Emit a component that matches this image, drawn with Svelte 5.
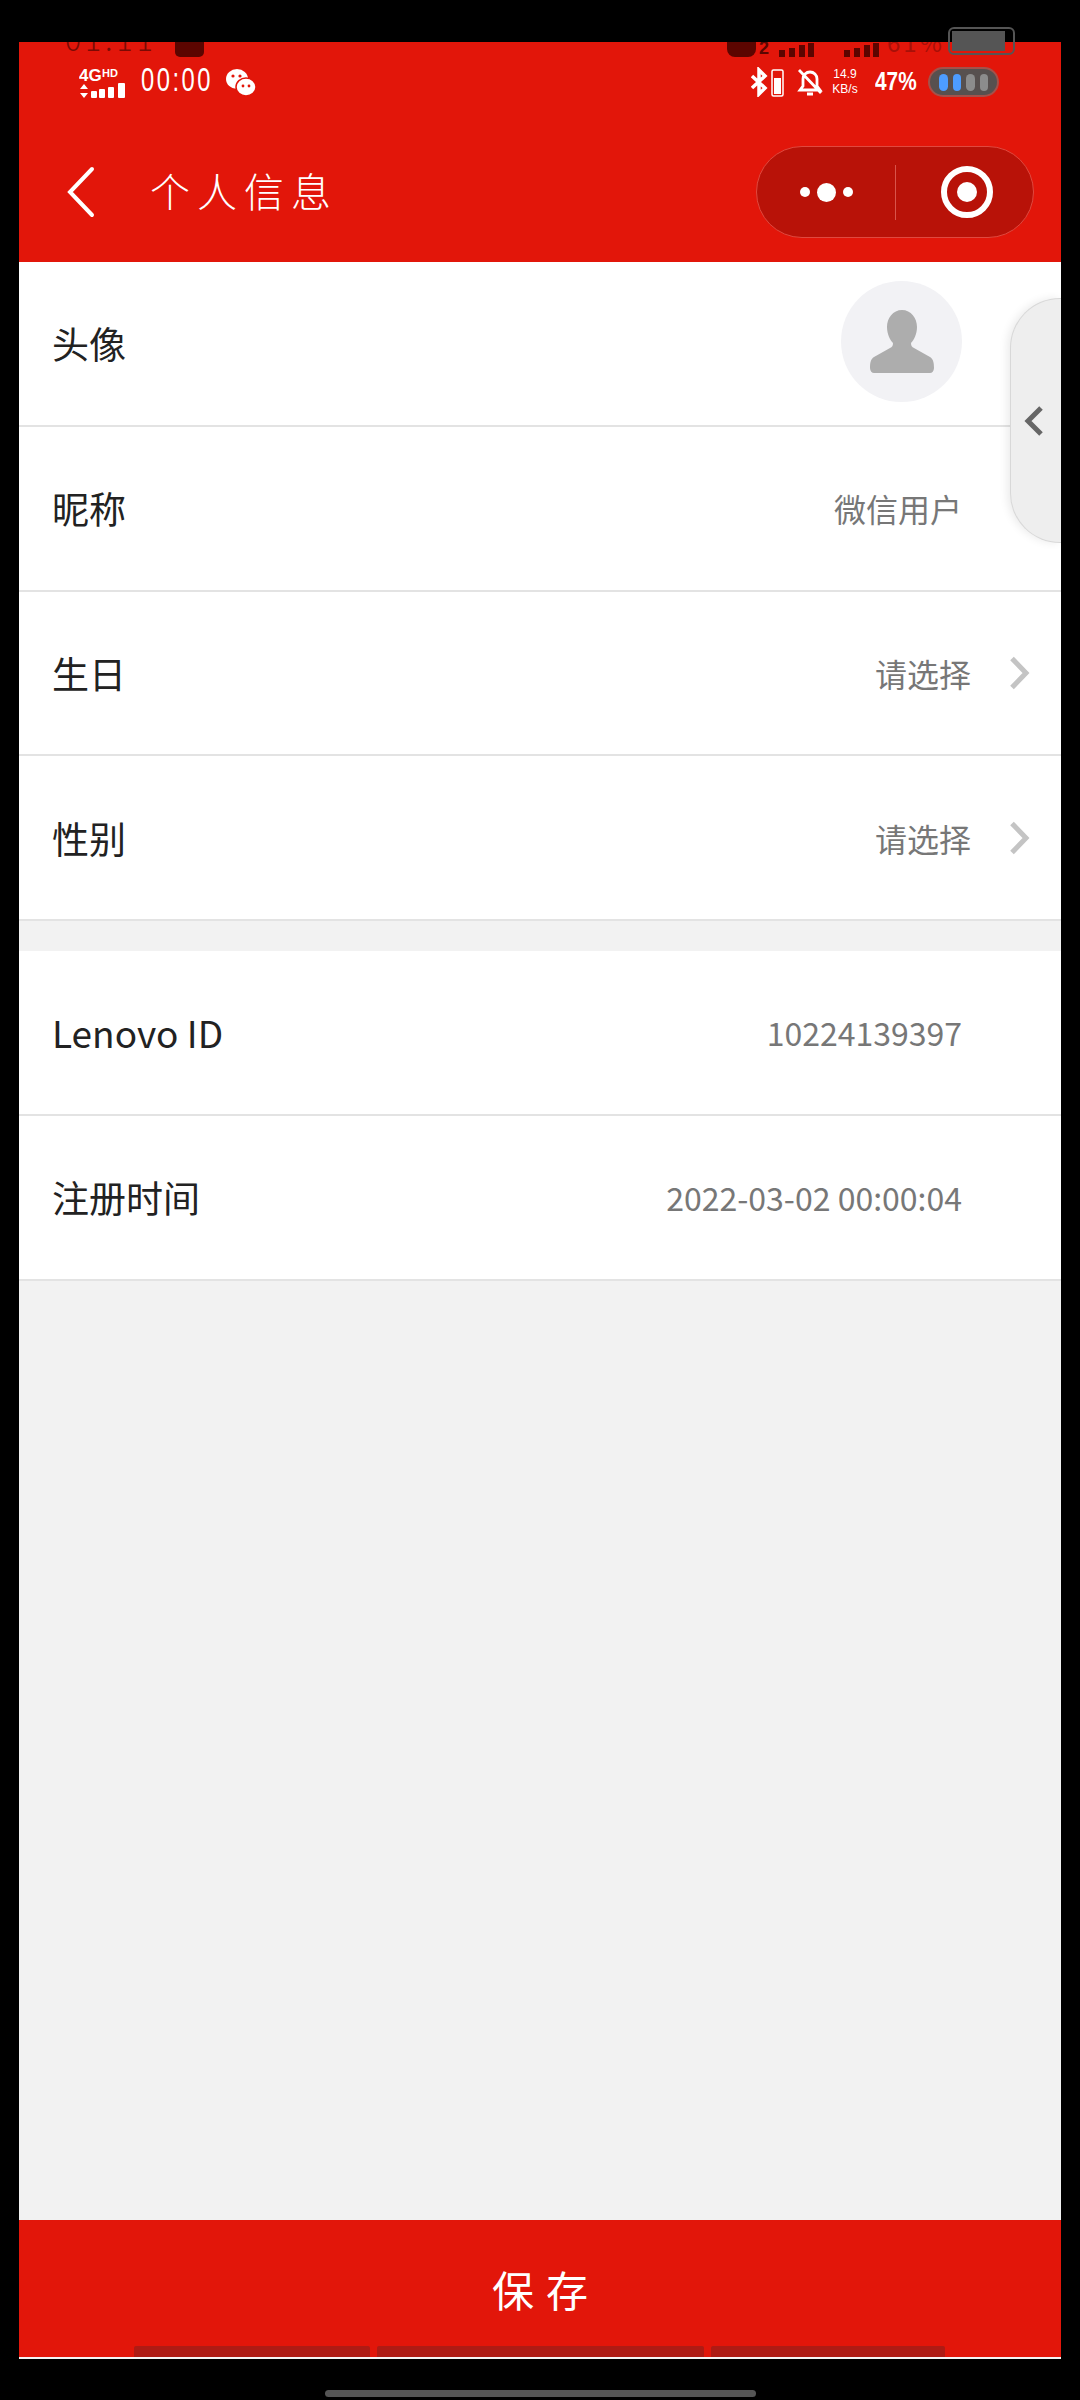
<script>
  const groupOne = [
    { label: '昵称', value: '微信用户' },
    { label: '生日', value: '请选择', arrow: true },
    { label: '性别', value: '请选择', arrow: true }
  ];
  const groupTwo = [
    { label: 'Lenovo ID', value: '10224139397' },
    { label: '注册时间', value: '2022-03-02 00:00:04' }
  ];
</script>

{#snippet row(item)}
  <div class="row">
    <span class="label">{item.label}</span>
    <span class="value" class:with-arrow={item.arrow}>{item.value}</span>
    {#if item.arrow}
      <svg class="arrow" width="20" height="34" viewBox="0 0 20 34">
        <path d="M2 2.500l14 14.500L2 31.500" fill="none" stroke="#c4c4c4" stroke-width="5" />
      </svg>
    {/if}
  </div>
{/snippet}

<div class="frame">
  <div class="screen">
    <header>
      <!-- the phone's own status bar, half hidden behind the screen edge -->
      <div class="ghost-left">
        <span class="ghost-time">01:11</span>
        <span class="ghost-badge"></span>
      </div>
      <div class="ghost-right">
        <span class="ghost-hd"></span>
        <span class="ghost-two">2</span>
        <svg width="110" height="16" viewBox="0 0 110 16" fill="#5c0500">
          <rect x="10" y="8" width="6" height="7" /><rect x="20" y="6" width="6" height="9" /><rect x="30" y="3" width="6" height="12" /><rect x="39" y="1" width="6" height="14" />
          <rect x="75" y="8" width="6" height="7" /><rect x="85" y="6" width="6" height="9" /><rect x="95" y="3" width="6" height="12" /><rect x="104" y="1" width="6" height="14" />
        </svg>
        <span class="ghost-percent">61%</span>
      </div>
      <div class="ghost-battery"><span></span></div>

      <div class="status">
        <div class="status-left">
          <svg width="48" height="32" viewBox="0 0 48 32" fill="#fff">
            <text x="0" y="14" font-family="Liberation Sans" font-weight="700" font-size="17">4G</text>
            <text x="23" y="10" font-family="Liberation Sans" font-weight="700" font-size="11">HD</text>
            <path d="M5 17l4 5H1zM5 31l4-5H1z" />
            <rect x="12" y="24" width="6" height="7" rx="1" /><rect x="20" y="22" width="6" height="9" rx="1" /><rect x="29" y="20" width="6" height="11" rx="1" /><rect x="39" y="16" width="7" height="15" rx="1" />
          </svg>
          <span class="clock">00:00</span>
          <svg width="30" height="30" viewBox="0 0 30 30" fill="#fff">
            <ellipse cx="11" cy="11" rx="11" ry="10" />
            <ellipse cx="20" cy="19" rx="10" ry="9" stroke="#e2160a" stroke-width="1.500" />
            <circle cx="7" cy="8" r="1.600" fill="#e2160a" /><circle cx="14" cy="8" r="1.600" fill="#e2160a" />
            <circle cx="17" cy="18" r="1.400" fill="#e2160a" /><circle cx="23" cy="18" r="1.400" fill="#e2160a" />
          </svg>
        </div>
        <div class="status-right">
          <svg width="34" height="30" viewBox="0 0 34 30">
            <path d="M1 9l13 12-6 6V3l6 6L1 21" fill="none" stroke="#fff" stroke-width="3.500" />
            <rect x="21" y="3" width="11" height="26" rx="1.500" fill="none" stroke="#fff" stroke-width="1.500" />
            <rect x="23" y="11" width="7" height="16" fill="#fff" />
          </svg>
          <svg class="bell" width="28" height="30" viewBox="0 0 28 30" fill="none" stroke="#fff" stroke-width="2.800">
            <path d="M4 23h20l-3-4v-7a7 7 0 0 0-14 0v7zM11 27h6M3 3l22 23" />
          </svg>
          <div class="speed"><span>14.9</span><span class="unit">KB/s</span></div>
          <span class="percent">47%</span>
          <div class="pill-battery">
            <i class="on"></i><i class="on"></i><i></i><i></i>
          </div>
        </div>
      </div>

      <div class="titlebar">
        <svg width="30" height="52" viewBox="0 0 30 52">
          <path d="M26 3L4 26l22 23" fill="none" stroke="#fff" stroke-width="4" stroke-linecap="round" />
        </svg>
        <h1>个人信息</h1>
        <div class="capsule">
          <div class="dots">
            <span></span><span class="big"></span><span></span>
          </div>
          <div class="sep"></div>
          <div class="target"><span></span></div>
        </div>
      </div>
    </header>

    <main>
      <div class="group">
        <div class="row avatar-row">
          <span class="label">头像</span>
          <div class="avatar">
            <svg width="64" height="64" viewBox="0 0 64 64" fill="#adadad">
              <path d="M32 0C41 0 47 8 47 17C47 24 44 30 41 33C41 36 42 37 44 38L60 47C63 49 64 52 64 58C64 61 62 63 60 63H4C2 63 0 61 0 58C0 52 1 49 4 47L20 38C22 37 23 36 23 33C20 30 17 24 17 17C17 8 23 0 32 0Z" />
            </svg>
          </div>
        </div>
        {#each groupOne as item}
          {@render row(item)}
        {/each}
      </div>
      <div class="group second">
        {#each groupTwo as item}
          {@render row(item)}
        {/each}
      </div>

      <div class="side-tab">
        <svg width="20" height="32" viewBox="0 0 20 32">
          <path d="M17 3L4 16l13 13" fill="none" stroke="#666" stroke-width="5" />
        </svg>
      </div>
    </main>

    <footer>
      <span>保存</span>
      <div class="tabs"><i class="one"></i><i class="two"></i><i class="three"></i></div>
    </footer>
  </div>
  <div class="home"></div>
</div>

<style>
  :global(body) {
    background: #000;
  }

  .frame {
    width: 1080px;
    height: 2400px;
    box-sizing: border-box;
    padding-top: 42px;
    background: #000;
    display: flex;
    flex-direction: column;
    align-items: center;
    font-family: "Noto Sans CJK SC", "Noto Sans", sans-serif;
    overflow: hidden;
  }

  .screen {
    width: 1042px;
    height: 2317px;
    display: flex;
    flex-direction: column;
    background: #f2f2f2;
    border-bottom: 2px solid #f4f4f4;
    box-sizing: border-box;
  }

  header {
    position: relative;
    height: 220px;
    flex: none;
    background: #e2160a;
    color: #fff;
  }

  .ghost-left {
    position: absolute;
    left: 46px;
    top: 0;
    height: 16px;
    display: flex;
    gap: 18px;
    overflow: hidden;
  }

  .ghost-time {
    margin-top: -20px;
    font-size: 30px;
    line-height: 32px;
    letter-spacing: 4px;
    font-weight: 300;
    color: #7a0a04;
  }

  .ghost-badge {
    width: 29px;
    height: 15px;
    background: #5c0500;
    border-radius: 0 0 5px 5px;
  }

  .ghost-right {
    position: absolute;
    left: 708px;
    top: 0;
    height: 16px;
    display: flex;
    align-items: flex-start;
    overflow: hidden;
  }

  .ghost-hd {
    width: 29px;
    height: 15px;
    background: #5c0500;
    border-radius: 0 0 8px 8px;
  }

  .ghost-two {
    margin: -3px 0 0 3px;
    font-family: "Liberation Sans", sans-serif;
    font-weight: 700;
    font-size: 18px;
    line-height: 18px;
    color: #5c0500;
  }

  .ghost-percent {
    margin: -14px 0 0 8px;
    font-size: 24px;
    line-height: 28px;
    letter-spacing: 3px;
    color: #a81008;
  }

  .ghost-battery {
    position: absolute;
    left: 929px;
    top: -15px;
    width: 67px;
    height: 28px;
    padding: 2px;
    box-sizing: border-box;
    border: 2px solid #555;
    border-radius: 6px;
  }

  .ghost-battery span {
    display: block;
    width: 53px;
    height: 100%;
    background: #555;
  }

  .status {
    display: flex;
    justify-content: space-between;
    padding: 25px 62px 0 60px;
    height: 56px;
  }

  .status-left,
  .status-right {
    display: flex;
    align-items: flex-start;
  }

  .status-left svg:last-child {
    margin: 1px 0 0 13px;
  }

  .clock {
    margin-left: 14px;
    width: 72px;
    font-family: "Liberation Sans", sans-serif;
    font-size: 33px;
    line-height: 26px;
    letter-spacing: 3.500px;
    white-space: nowrap;
    transform: scaleX(0.72);
    transform-origin: left center;
  }

  .bell {
    margin-left: 11px;
  }

  .speed {
    margin-left: 6px;
    width: 30px;
    display: flex;
    flex-direction: column;
    align-items: center;
    font-family: "Liberation Sans", sans-serif;
    font-size: 12px;
    line-height: 15px;
  }

  .percent {
    margin: 1px 0 0 15px;
    width: 42px;
    font-family: "Liberation Sans", sans-serif;
    font-size: 26px;
    line-height: 26px;
    font-weight: 700;
    white-space: nowrap;
    transform: scaleX(0.8);
    transform-origin: left center;
  }

  .pill-battery {
    margin-left: 11px;
    width: 71px;
    height: 30px;
    box-sizing: border-box;
    padding: 5px 8px 0 9px;
    display: flex;
    gap: 4px;
    background: #57504f;
    border: 2px solid #a3524b;
    border-radius: 15px;
  }

  .pill-battery i {
    width: 10px;
    height: 17px;
    margin-right: 1px;
    border-radius: 5px;
    background: #8c8c8c;
  }

  .pill-battery i.on {
    background: #4d9cff;
  }

  .titlebar {
    display: flex;
    align-items: center;
    height: 92px;
    margin-top: 23px;
    padding: 0 27px 0 47px;
  }

  h1 {
    margin: 0 0 4px 54px;
    font-size: 40px;
    font-weight: 300;
    letter-spacing: 7px;
    line-height: 52px;
  }

  .capsule {
    margin-left: auto;
    width: 278px;
    height: 92px;
    box-sizing: border-box;
    display: flex;
    align-items: center;
    background: #b81208;
    border: 1px solid #e0493f;
    border-radius: 46px;
  }

  .dots {
    width: 138px;
    display: flex;
    align-items: center;
    justify-content: center;
    gap: 7px;
  }

  .dots span {
    width: 10px;
    height: 10px;
    border-radius: 50%;
    background: #fff;
  }

  .dots .big {
    width: 19px;
    height: 19px;
  }

  .sep {
    width: 1px;
    height: 55px;
    background: #d8544b;
  }

  .target {
    margin-left: 45px;
    width: 52px;
    height: 52px;
    box-sizing: border-box;
    border: 6px solid #fff;
    border-radius: 50%;
    display: flex;
    align-items: center;
    justify-content: center;
  }

  .target span {
    width: 20px;
    height: 20px;
    border-radius: 50%;
    background: #fff;
  }

  main {
    position: relative;
    flex: 1;
  }

  .group {
    background: #fff;
  }

  .second {
    margin-top: 30px;
  }

  .row {
    height: 164.750px;
    box-sizing: border-box;
    padding: 0 99px 0 33px;
    display: flex;
    align-items: center;
    border-bottom: 2px solid #e3e3e3;
  }

  .row:has(.arrow) {
    padding-right: 31px;
  }

  .label {
    font-size: 37px;
    color: #222;
  }

  .value {
    margin-left: auto;
    font-size: 32px;
    color: #777;
  }

  .with-arrow {
    margin-right: 39px;
  }

  .avatar {
    margin: 0 0 3px auto;
    width: 121px;
    height: 121px;
    border-radius: 50%;
    background: #f2f2f5;
    display: flex;
    align-items: center;
    justify-content: center;
  }

  .side-tab {
    position: absolute;
    right: 0;
    top: 36px;
    width: 51px;
    height: 245px;
    box-sizing: border-box;
    padding-left: 13px;
    display: flex;
    align-items: center;
    background: #eeeeee;
    border: 1px solid #d8d8d8;
    border-right: none;
    border-radius: 50px 0 0 50px;
    box-shadow: -3px 0 8px rgba(0, 0, 0, 0.08);
  }

  footer {
    position: relative;
    flex: none;
    height: 137px;
    background: #e2160a;
    color: #fff;
    display: flex;
    align-items: center;
    justify-content: center;
  }

  footer span {
    font-size: 42px;
    letter-spacing: 12px;
    margin-right: -12px;
  }

  .tabs i {
    position: absolute;
    bottom: 0;
    height: 11px;
    background: #ae1b14;
    border-radius: 2px 2px 0 0;
  }

  .tabs .one {
    left: 115px;
    width: 236px;
  }

  .tabs .two {
    left: 358px;
    width: 327px;
  }

  .tabs .three {
    left: 692px;
    width: 234px;
  }

  .home {
    margin-top: 31px;
    width: 431px;
    height: 7px;
    border-radius: 4px;
    background: #555;
  }
</style>
